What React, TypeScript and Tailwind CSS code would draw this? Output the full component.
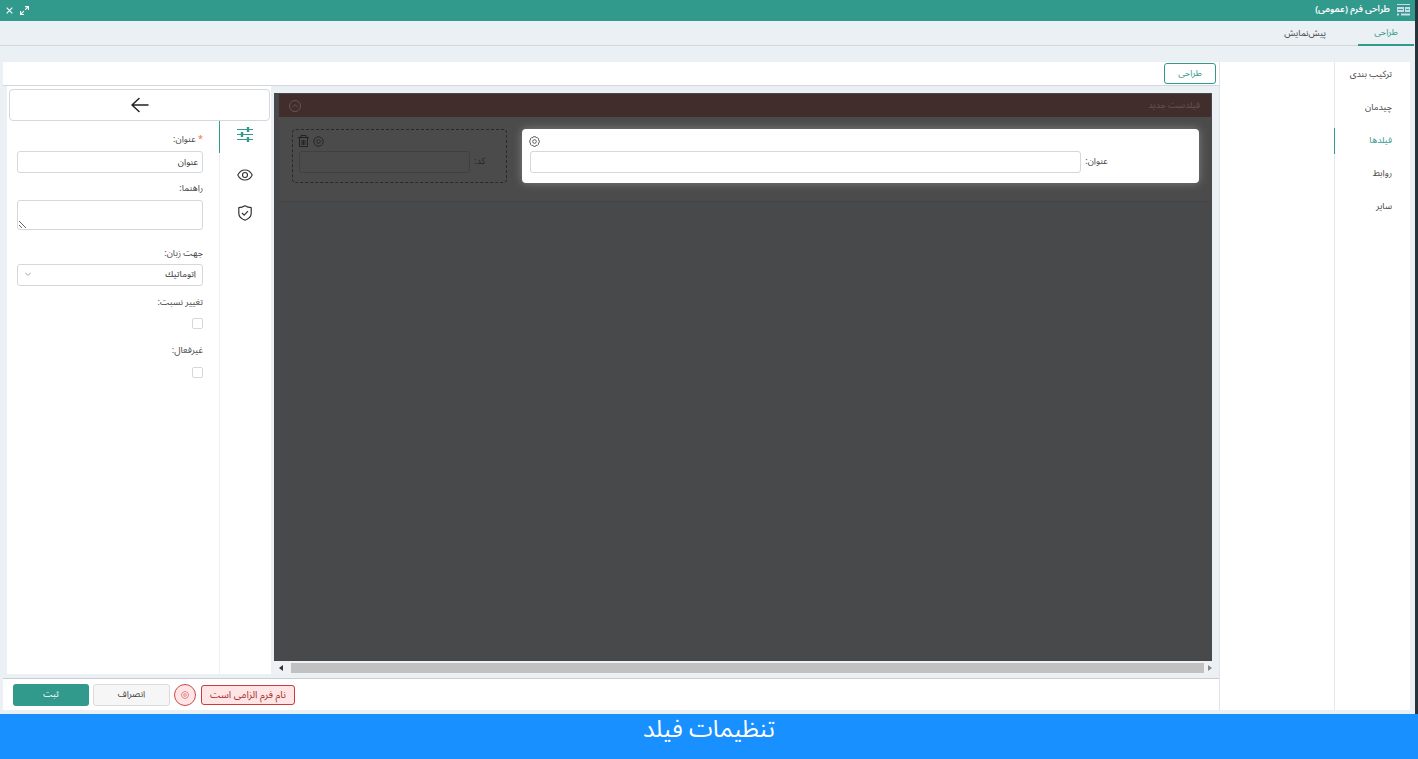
import React from "react";

const sideItems = ["ترکیب بندی", "چیدمان", "فیلدها", "روابط", "سایر"];

const fieldBox =
  "block w-full rounded-[3px] border border-[#d5d7d9] bg-white text-[9px] text-[#333] outline-none";

function Gear({ className }: { className: string }) {
  return (
    <svg viewBox="0 0 24 24" fill="none" stroke="currentColor" strokeWidth="1.800" strokeLinejoin="round" className={className}>
      <path d="M9.500 1.500h5l1 2.300 2.600-.6 3.200 3.400-.9 2.500L22.500 10v4.200l-2.200 1 .8 2.500-3.200 3.200-2.400-.8-1.200 2.400H9.700l-1.200-2.400-2.400.8-3.200-3.200.8-2.500-2.200-1V10l2.100-.9-.9-2.500 3.200-3.400 2.600.6z" />
      <circle cx="12" cy="12" r="4" />
    </svg>
  );
}

function Trash() {
  return (
    <svg viewBox="0 0 11 12" fill="none" stroke="currentColor" className="h-3 w-[11px]">
      <path d="M0 2.500h11M3 2V.5h5V2M1.500 3v8.500h8V3M4 5v5M5.500 5v5M7 5v5" />
    </svg>
  );
}

function FormIcon() {
  return (
    <svg viewBox="0 0 13 12" className="h-3 w-[13px]" fill="none" stroke="#c9dcec">
      <path d="M0 .5h13" strokeWidth="1" />
      <path d="M0 3h7v5H0zM8 3h5v5H8z" fill="#c9dcec" stroke="none" />
      <path d="M1 5.500h5M9 5.500h3" stroke="#5b8fa8" />
      <path d="M0 10.500h2M4 10.500h9" strokeWidth="2" />
    </svg>
  );
}

function Sliders() {
  return (
    <svg viewBox="0 0 16 16" className="size-4" fill="none" stroke="currentColor">
      <path d="M0 2.500h16M0 7.500h16M0 12.500h16" strokeWidth="1" />
      <path d="M11 0v5M5 5v5M11 10v5" strokeWidth="2.400" />
    </svg>
  );
}

function Eye() {
  return (
    <svg viewBox="0 0 16 16" className="size-4" fill="none" stroke="currentColor" strokeWidth="1.100">
      <path d="M.8 8C2.400 4.600 5 3 8 3s5.600 1.600 7.200 5C13.600 11.400 11 13 8 13S2.400 11.400.8 8z" />
      <circle cx="8" cy="8" r="2.500" />
    </svg>
  );
}

function Shield() {
  return (
    <svg viewBox="0 0 16 16" className="size-4" fill="none" stroke="currentColor" strokeWidth="1.200" strokeLinejoin="round">
      <path d="M8 .8c2 1.300 4 1.900 6.200 1.900v5.800c0 3-2.400 5.200-6.200 6.700-3.800-1.500-6.200-3.700-6.200-6.700V2.700C4 2.700 6 2.100 8 .8z" />
      <path d="M5 8l2.200 2.200L11 6.200" />
    </svg>
  );
}

export default function App() {
  return (
    <div
      dir="rtl"
      className="flex h-screen flex-col bg-[#ebf0f4] text-[9px] leading-3 text-[#444] [font-family:'Noto_Sans_Arabic','DejaVu_Sans',sans-serif]"
    >
      <div className="flex min-h-0 flex-1 flex-col border-r-[3px] border-[#26333b]">
        <header className="flex h-[21px] shrink-0 items-center gap-[7px] bg-[#32998d] px-[5px] pb-px text-white">
          <FormIcon />
          <h1 className="text-[9px] font-semibold">طراحی فرم (عمومی)</h1>
          <div className="mr-auto flex items-center gap-[6px]">
            <button aria-label="تمام صفحه">
              <svg viewBox="0 0 16 16" className="size-[9px]" fill="none" stroke="currentColor" strokeWidth="2">
                <path d="M9 1h6v6M15 1L9 7M7 15H1V9M1 15l6-6" />
              </svg>
            </button>
            <button aria-label="بستن">
              <svg viewBox="0 0 16 16" className="size-[9px]" stroke="currentColor" strokeWidth="2">
                <path d="M3 3l10 10M13 3L3 13" />
              </svg>
            </button>
          </div>
        </header>

        <nav className="flex h-[25px] shrink-0 gap-4 border-b border-[#d3d8dc] pr-px">
          <button className="-mb-px w-14 border-b-2 border-[#32998d] pt-px text-[#32998d]">طراحی</button>
          <button className="px-4 pt-px">پیش‌نمایش</button>
        </nav>

        <main className="mt-4 mr-[5px] mb-1 ml-[3px] flex min-h-0 flex-1 bg-white">
          <aside className="flex w-[76px] shrink-0 flex-col gap-[7px] border-l border-[#e6e8ea]">
            {sideItems.map((item) => (
              <button
                key={item}
                className={
                  item === "فیلدها"
                    ? "-ml-px h-[26px] border-l border-[#32998d] pr-[18px] text-right text-[#32998d]"
                    : "h-[26px] pr-[18px] text-right"
                }
              >
                {item}
              </button>
            ))}
          </aside>
          <div className="w-[114px] shrink-0" />

          <section className="flex min-w-0 flex-1 flex-col border-r border-[#dfe3e6]">
            <div className="flex h-6 shrink-0 items-center border-b border-[#d3d8dc] pr-[3px]">
              <button className="h-[21px] w-[52px] rounded-[3px] border border-[#32998d] text-[#32998d]">طراحی</button>
            </div>

            <div className="flex min-h-0 flex-1 bg-[#ebf0f4] pr-[7px] pb-1 pl-1">
              <div className="flex min-w-0 flex-1 flex-col pt-[7px]">
                <div className="flex-1 bg-[#48494a] bg-[repeating-linear-gradient(#48494a_0px,#48494a_7px,#454648_8px)] px-px pt-px pl-[5px]">
                  <div className="border-b border-[#434445] bg-[#4b4b4b]">
                    <div className="flex h-[23px] items-center justify-between bg-[#412e2c] pr-[11px] pl-[10px] text-[#665553]">
                      <span>فیلدست جدید</span>
                      <button aria-label="جمع کردن">
                        <svg viewBox="0 0 24 24" className="size-3" fill="none" stroke="currentColor" strokeWidth="2">
                          <circle cx="12" cy="12" r="11" />
                          <path d="M7 14l5-5 5 5" />
                        </svg>
                      </button>
                    </div>
                    <div className="grid grid-cols-[minmax(0,676fr)_minmax(0,215fr)] gap-[15px] pt-3 pr-3 pb-[18px] pl-[13px]">
                      <div className="flex h-[54px] flex-col rounded-[4px] bg-white px-2 pt-[7px] shadow-[0_0_10px_rgba(255,255,255,0.3)]">
                        <button className="mr-auto -ml-px flex" aria-label="تنظیمات عنوان">
                          <Gear className="size-[11px]" />
                        </button>
                        <div className="mt-1 flex items-center gap-1">
                          <label htmlFor="title-preview" className="w-[16%] text-left">عنوان:</label>
                          <input id="title-preview" className="h-[22px] min-w-0 flex-1 rounded-[3px] border border-[#d5d7d9] bg-white px-2 outline-none" />
                        </div>
                      </div>
                      <div className="flex h-[54px] flex-col rounded-[4px] border border-dashed border-[#292929] px-[6px] pt-[5px] text-[#222]">
                        <div className="mr-auto -ml-px flex items-center gap-1">
                          <button className="flex" aria-label="تنظیمات کد">
                            <Gear className="size-[11px]" />
                          </button>
                          <button className="flex" aria-label="حذف">
                            <Trash />
                          </button>
                        </div>
                        <div className="mt-1 flex items-center gap-1">
                          <label htmlFor="code-preview" className="w-[13%] text-left">کد:</label>
                          <input id="code-preview" className="h-[22px] min-w-0 flex-1 rounded-[3px] border border-[#404040] bg-transparent px-2 outline-none" />
                        </div>
                      </div>
                    </div>
                  </div>
                </div>
                <div dir="ltr" className="flex h-[13px] shrink-0 items-center justify-between gap-2 bg-[#f0f1f2] pl-[5px]">
                  <svg viewBox="0 0 4 6" className="h-[6px] w-1" fill="#333"><path d="M4 0v6L0 3z" /></svg>
                  <div className="h-[10px] flex-1 bg-[#c1c1c1]" />
                  <svg viewBox="0 0 4 6" className="-ml-1 h-[6px] w-1" fill="#888"><path d="M0 0v6l4-3z" /></svg>
                </div>
              </div>

              <div className="mr-[3px] flex w-[264px] shrink-0 flex-col bg-white pt-[3px]">
                <button
                  className="mr-px ml-[2px] flex h-8 shrink-0 items-center justify-center rounded-[4px] border border-[#d5d8db]"
                  aria-label="بازگشت"
                >
                  <svg viewBox="0 0 18 16" className="h-4 w-[18px]" fill="none" stroke="#222" strokeWidth="1.500" strokeLinecap="round" strokeLinejoin="round">
                    <path d="M17 8H1M8 1.500L1 8l7 6.500" />
                  </svg>
                </button>
                <div className="flex min-h-0 flex-1">
                  <div className="flex w-[52px] shrink-0 flex-col border-l border-[#eceeef] text-[#333]">
                    <button className="-ml-px flex h-8 items-center justify-center border-l border-[#32998d] pr-[2px] pb-1 text-[#32998d]" aria-label="تنظیمات">
                      <Sliders />
                    </button>
                    <button className="mt-1 flex h-9 items-center justify-center pr-[2px]" aria-label="نمایش">
                      <Eye />
                    </button>
                    <button className="mt-[2px] flex h-9 items-center justify-center pr-[2px]" aria-label="اعتبارسنجی">
                      <Shield />
                    </button>
                  </div>

                  <form className="min-w-0 flex-1 pt-[13px] pr-4 pl-[10px]">
                    <label htmlFor="title" className="block">
                      <span className="text-[#f36b43]">*</span> عنوان:
                    </label>
                    <input id="title" defaultValue="عنوان" className={`${fieldBox} mt-[5px] h-[22px] px-1`} />
                    <label htmlFor="help" className="mt-[10px] block">راهنما:</label>
                    <textarea id="help" className={`${fieldBox} mt-[5px] h-[30px] resize`} />
                    <label htmlFor="direction" className="mt-[18px] block">جهت زبان:</label>
                    <div className="relative mt-1">
                      <select id="direction" className={`${fieldBox} h-[22px] appearance-none px-[6px]`}>
                        <option>اتوماتیك</option>
                      </select>
                      <svg viewBox="0 0 8 8" className="pointer-events-none absolute top-[7px] left-2 size-[6px]" fill="none" stroke="#888">
                        <path d="M0 2l4 4 4-4" />
                      </svg>
                    </div>
                    <label htmlFor="ratio" className="mt-[11px] block">تغییر نسبت:</label>
                    <input id="ratio" type="checkbox" className="mt-[9px] block size-[11px] appearance-none rounded-[2px] border border-[#d5d7d9]" />
                    <label htmlFor="disabled" className="mt-4 block">غیرفعال:</label>
                    <input id="disabled" type="checkbox" className="mt-[10px] block size-[11px] appearance-none rounded-[2px] border border-[#d5d7d9]" />
                  </form>
                </div>
              </div>
            </div>

            <footer className="flex h-8 shrink-0 items-center justify-end gap-1 border-t border-[#c9cdd0] bg-white pl-[10px]">
              <p role="alert" className="ml-px flex h-5 w-[94px] items-center justify-center rounded-[3px] border border-[#cc3a3a] bg-[#ffe5e5] text-[10px] whitespace-nowrap text-[#a83232]">
                نام فرم الزامی است
              </p>
              <button className="flex size-[22px] items-center justify-center rounded-full border border-[#cc4a4a] bg-[#ffe5e5] text-[#d95555]" aria-label="خطاها">
                <Gear className="size-2" />
              </button>
              <button className="h-[22px] w-[77px] rounded-[3px] border border-[#dcdcdc] bg-[#f6f6f6]">انصراف</button>
              <button className="h-[22px] w-[76px] rounded-[3px] bg-[#32998d] text-white">ثبت</button>
            </footer>
          </section>
        </main>
      </div>
      <div className="flex h-[45px] shrink-0 justify-center bg-[#1890ff] text-2xl leading-8 text-white">
        <h2>تنظیمات فیلد</h2>
      </div>
    </div>
  );
}
